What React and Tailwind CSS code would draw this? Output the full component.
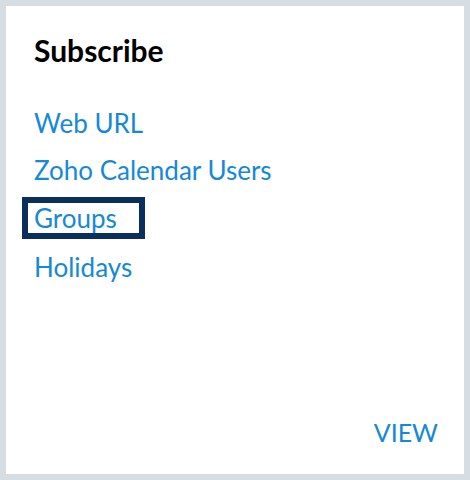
export default function App() {
  return (
    <div className="w-[470px] h-[480px] bg-[#d6dee4] p-[6px] font-['Lato','Liberation_Sans',sans-serif]">
      <div className="h-full bg-white flex flex-col pl-[28px] pr-[26px] pt-[26px] pb-[27px]">
        <h2 className="text-[30px] leading-[36px] font-bold text-black">Subscribe</h2>

        <ul className="mt-[32px] text-[26px] text-[#1589d8]">
          <li className="h-[47px] leading-[47px]">Web URL</li>
          <li className="h-[47px] leading-[47px]">Zoho Calendar Users</li>
          <li className="h-[50px] pt-[3px]">
            <div className="w-[123px] h-[42px] -ml-[12px] pl-[6px] border-[6px] border-[#0b2f5c] leading-[30px]">
              Groups
            </div>
          </li>
          <li className="h-[47px] leading-[47px]">Holidays</li>
        </ul>

        <div className="mt-auto text-right text-[25px] leading-[30px] text-[#1589d8]">VIEW</div>
      </div>
    </div>
  );
}
